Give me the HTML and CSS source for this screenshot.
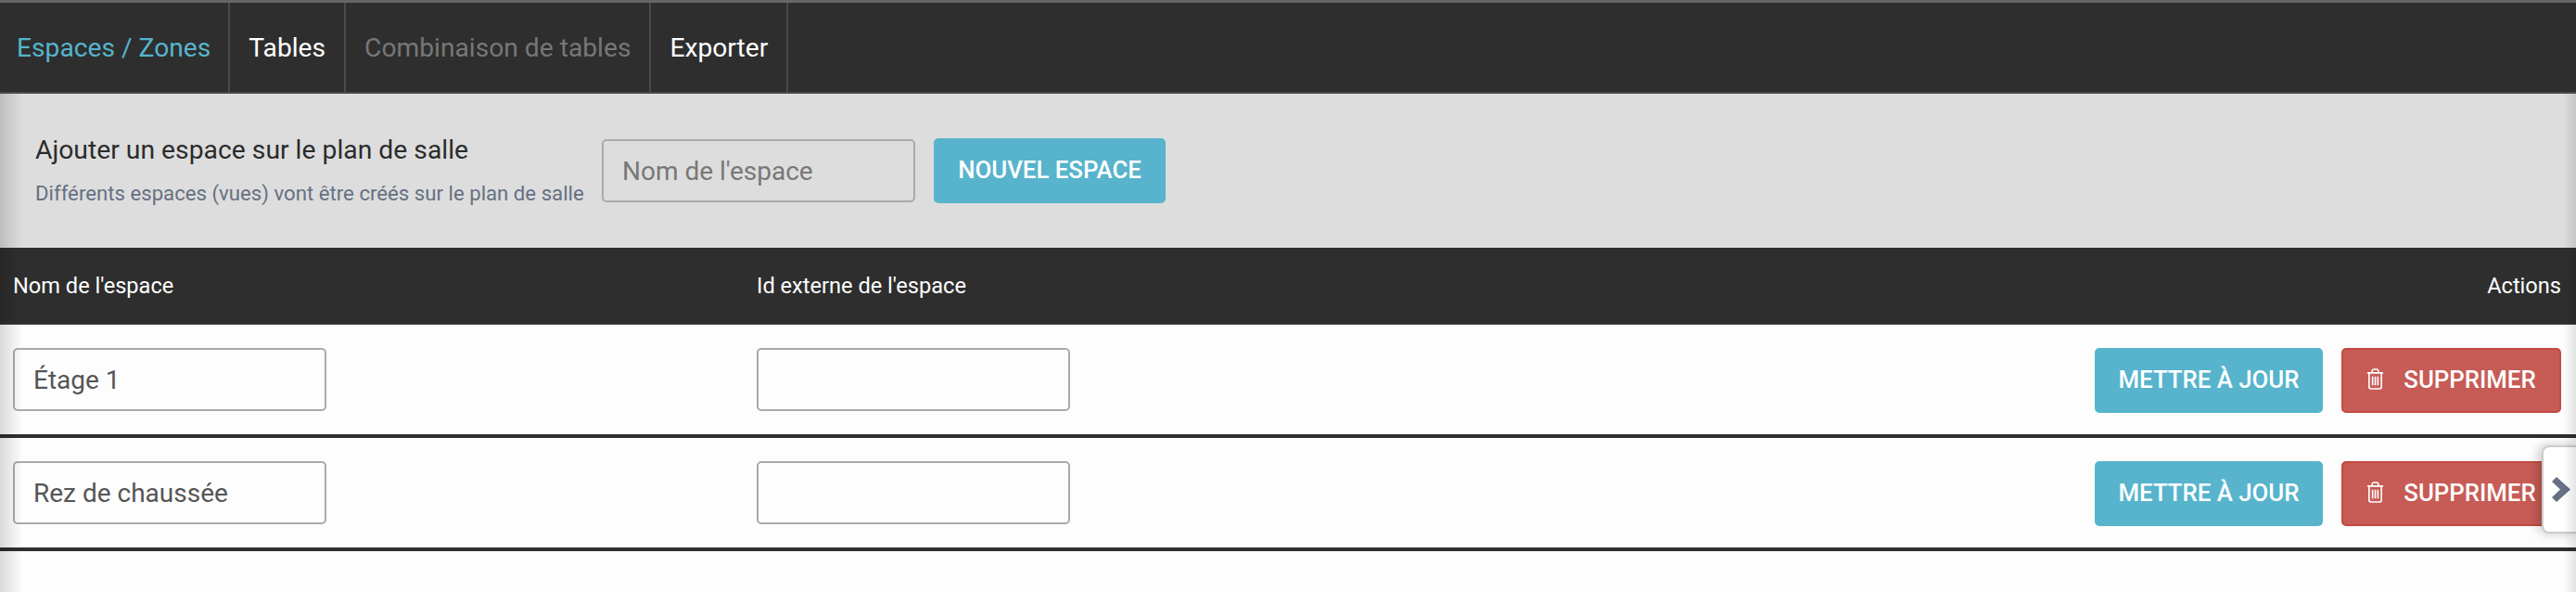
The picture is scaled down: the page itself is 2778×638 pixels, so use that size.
FILE: index.html
```html
<!DOCTYPE html>
<html lang="fr">
<head>
    <title>Espaces / Zones</title>
    <link rel="stylesheet" href="styles.css">
</head>
<body>
    <div class="page">
        <nav class="tabs">
            <a class="tab tab-active">Espaces / Zones</a>
            <a class="tab">Tables</a>
            <a class="tab tab-disabled">Combinaison de tables</a>
            <a class="tab">Exporter</a>
        </nav>

        <section class="add-panel">
            <div class="add-text">
                <h2>Ajouter un espace sur le plan de salle</h2>
                <p>Différents espaces (vues) vont être créés sur le plan de salle</p>
            </div>
            <input class="field field-new" type="text" placeholder="Nom de l'espace">
            <button class="btn btn-info btn-new">NOUVEL ESPACE</button>
        </section>

        <div class="row row-head">
            <div>Nom de l'espace</div>
            <div>Id externe de l'espace</div>
            <div class="actions-title">Actions</div>
        </div>

        <div class="row">
            <div><input class="field" type="text" value="Étage 1"></div>
            <div><input class="field" type="text"></div>
            <div class="actions">
                <button class="btn btn-info btn-update">METTRE À JOUR</button>
                <button class="btn btn-danger">
                    <svg class="trash" viewBox="0 0 20 24" fill="none" stroke="#fff" stroke-width="1.7">
                        <path d="M1 5h18M6.5 5V3a2 2 0 0 1 2-2h3a2 2 0 0 1 2 2v2"/>
                        <path d="M3 5v16a2 2 0 0 0 2 2h10a2 2 0 0 0 2-2V5"/>
                        <path d="M7 9v10M10 9v10M13 9v10"/>
                    </svg>
                    SUPPRIMER
                </button>
            </div>
        </div>

        <div class="row">
            <div><input class="field" type="text" value="Rez de chaussée"></div>
            <div><input class="field" type="text"></div>
            <div class="actions">
                <button class="btn btn-info btn-update">METTRE À JOUR</button>
                <button class="btn btn-danger">
                    <svg class="trash" viewBox="0 0 20 24" fill="none" stroke="#fff" stroke-width="1.7">
                        <path d="M1 5h18M6.5 5V3a2 2 0 0 1 2-2h3a2 2 0 0 1 2 2v2"/>
                        <path d="M3 5v16a2 2 0 0 0 2 2h10a2 2 0 0 0 2-2V5"/>
                        <path d="M7 9v10M10 9v10M13 9v10"/>
                    </svg>
                    SUPPRIMER
                </button>
            </div>
        </div>

        <button class="side-toggle">
            <svg viewBox="0 0 20 27" width="20" height="27">
                <path d="M0 5 5 0 20 13.500 5 27 0 22 9 13.500Z" fill="#667082"/>
            </svg>
        </button>
    </div>
</body>
</html>
```

FILE: styles.css
```css
* {
    box-sizing: border-box;
}

html,
body {
    margin: 0;
    padding: 0;
    height: 100%;
}

body {
    background-color: #fdfdfd;
    font-family: Roboto, "Liberation Sans", sans-serif;
    overflow: hidden;
}

.page {
    position: relative;
    height: 638px;
    overflow: hidden;
}

.page::before,
.page::after {
    content: "";
    position: absolute;
    top: 101px;
    bottom: 0;
    width: 24px;
    pointer-events: none;
}

.page::before {
    left: 0;
    background: linear-gradient(to right, rgba(0, 0, 0, 0.14), rgba(0, 0, 0, 0));
}

.page::after {
    right: 0;
    width: 14px;
    background: linear-gradient(to left, rgba(0, 0, 0, 0.1), rgba(0, 0, 0, 0));
}

.tabs {
    display: flex;
    height: 101px;
    background-color: #2e2e2e;
    border-top: 3px solid #666;
    border-bottom: 2px solid #4a4a4a;
}

.tab {
    display: flex;
    align-items: center;
    padding: 0 20px;
    border-right: 2px solid #4a4a4a;
    color: #fff;
    font-size: 28.2px;
}

.tab-active {
    padding: 0 19px 0 18px;
    color: #57b4cc;
}

.tab-disabled {
    color: #777;
}

.add-panel {
    display: flex;
    align-items: center;
    height: 166px;
    padding: 0 0 0 38px;
    background-color: #ddd;
}

.add-text {
    width: 611px;
}

.add-text h2 {
    margin: 0 0 14px;
    font-size: 28.3px;
    font-weight: 400;
    line-height: 34px;
    color: #2b2b2b;
}

.add-text p {
    margin: 0;
    font-size: 22.2px;
    line-height: 30px;
    color: #667082;
    white-space: nowrap;
}

.field {
    display: block;
    width: 338px;
    height: 68px;
    padding: 0 20px;
    border: 2px solid #aaa;
    border-radius: 5px;
    background-color: transparent;
    color: #555;
    font-family: inherit;
    font-size: 28px;
}

.field::placeholder {
    color: #777;
    opacity: 1;
}

.btn {
    display: inline-flex;
    align-items: center;
    justify-content: center;
    height: 70px;
    padding: 0 0 3px;
    border: 0;
    border-radius: 5px;
    color: #fff;
    font-family: inherit;
    font-size: 25.8px;
    font-weight: 500;
}

.btn-info {
    background-color: #57b4cc;
}

.btn-new {
    width: 250px;
    margin-left: 20px;
}

.btn-update {
    width: 246px;
}

.btn-danger {
    width: 237px;
    gap: 21px;
    border: 2px solid #c24a42;
    background-color: #c75b55;
}

.trash {
    width: 19px;
    height: 23px;
}

.row {
    display: grid;
    grid-template-columns: 802px 1fr auto;
    align-items: start;
    height: 122px;
    padding: 25px 16px 0 14px;
    border-bottom: 4px solid #2e2e2e;
}

.row-head {
    align-items: center;
    height: 83px;
    padding-top: 0;
    background-color: #2e2e2e;
    border-bottom: 1px solid #4a4a4a;
    color: #fff;
    font-size: 23.6px;
}

.actions-title {
    text-align: right;
}

.actions {
    display: flex;
    gap: 20px;
}

.side-toggle {
    position: absolute;
    top: 480px;
    right: -4px;
    display: flex;
    align-items: center;
    width: 41px;
    height: 95px;
    padding: 0 0 0 9px;
    border: 2px solid #ccc;
    border-radius: 8px 0 0 8px;
    background-color: #fff;
    box-shadow: -4px 0 12px rgba(0, 0, 0, 0.2);
}
```
